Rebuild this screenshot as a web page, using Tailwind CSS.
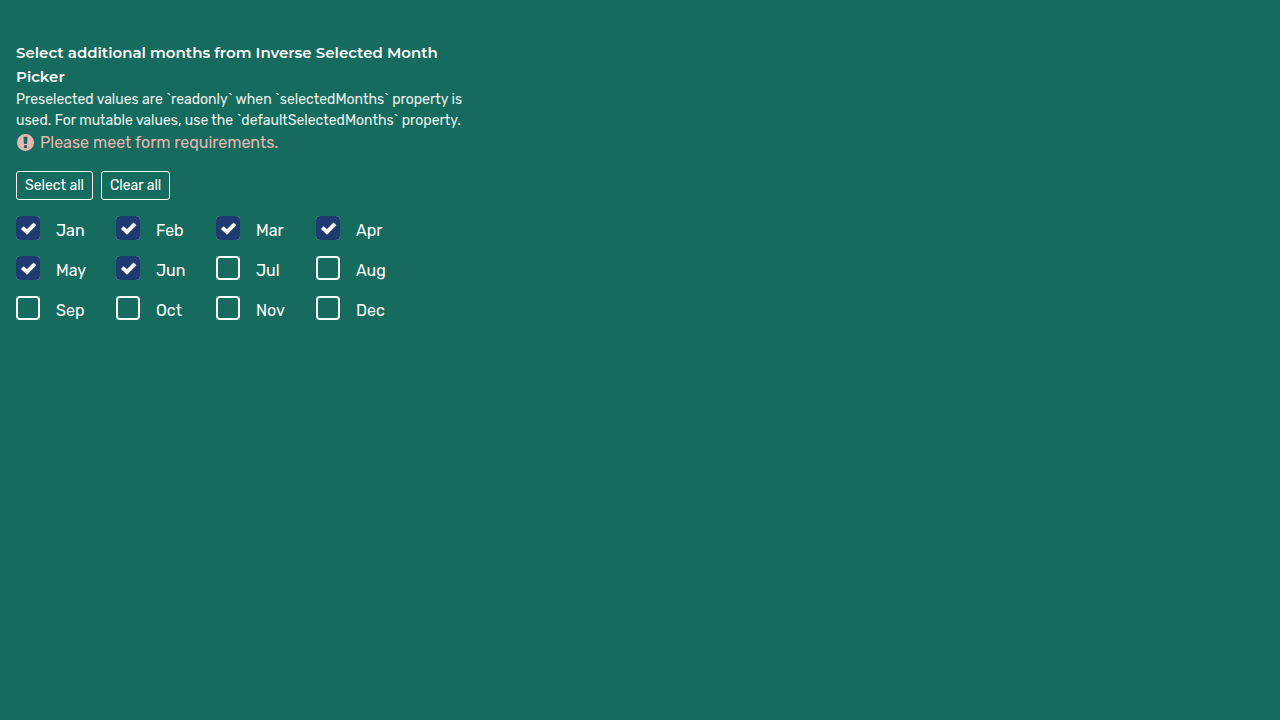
<!DOCTYPE html>
<html lang="en">
<head>
<meta charset="utf-8">
<meta name="viewport" content="width=device-width, initial-scale=1">
<title>Inverse Selected Month Picker</title>
<script src="https://cdn.jsdelivr.net/npm/@tailwindcss/browser@4"></script>
</head>
<body class="min-h-screen bg-[#156b5d] px-4 py-10 font-['Rubik','Roboto','Liberation_Sans',sans-serif] text-base text-white antialiased">
<form>
  <fieldset class="max-w-[448px]" aria-describedby="hint error">
    <legend class="pt-px font-['Montserrat','Inter','Liberation_Sans',sans-serif] text-[15px] leading-6 font-semibold">Select additional months from Inverse Selected Month Picker</legend>
    <p id="hint" class="text-sm leading-[21px] text-white/90">Preselected values are `readonly` when `selectedMonths` property is used. For mutable values, use the `defaultSelectedMonths` property.</p>
    <p id="error" class="flex items-center gap-1.5 leading-6 text-[#e8b5b5]">
      <svg class="mb-px ml-px size-[17px] shrink-0" viewBox="0 0 16 16" fill="currentColor" aria-hidden="true"><path fill-rule="evenodd" d="M8 0a8 8 0 1 0 0 16A8 8 0 0 0 8 0ZM6.1 2.6h3.8L9.5 9.4h-3L6.1 2.6ZM8 10.3a1.6 1.6 0 1 1 0 3.2 1.6 1.6 0 0 1 0-3.2Z"/></svg>
      Please meet form requirements.
    </p>
    <div class="mt-4 flex gap-2 text-sm">
      <button type="button" class="h-[29px] rounded-[3px] border border-white px-2">Select all</button>
      <button type="button" class="h-[29px] rounded-[3px] border border-white px-2">Clear all</button>
    </div>
    <div id="months" class="mt-4 grid grid-cols-[repeat(4,100px)] gap-y-4"></div>
  </fieldset>
</form>
<script>
  const months = ['Jan','Feb','Mar','Apr','May','Jun','Jul','Aug','Sep','Oct','Nov','Dec'];
  document.getElementById('months').innerHTML = months.map((month, i) => `
    <label class="flex h-6 gap-4">
      <span class="grid size-6 shrink-0">
        <input type="checkbox" name="months" value="${month}" ${i < 6 ? 'checked' : ''} class="peer col-start-1 row-start-1 size-6 appearance-none rounded-[4px] border-2 border-white">
        <svg class="pointer-events-none invisible col-start-1 row-start-1 size-6 rounded-[4px] bg-[#1f3a70] peer-checked:visible" viewBox="0 0 24 24" fill="none" stroke="white" stroke-width="4" aria-hidden="true"><path d="M6.3 11.6 11 16 19 7.8"/></svg>
      </span>
      <span class="pt-[3px] leading-6">${month}</span>
    </label>`).join('');
</script>
</body>
</html>
